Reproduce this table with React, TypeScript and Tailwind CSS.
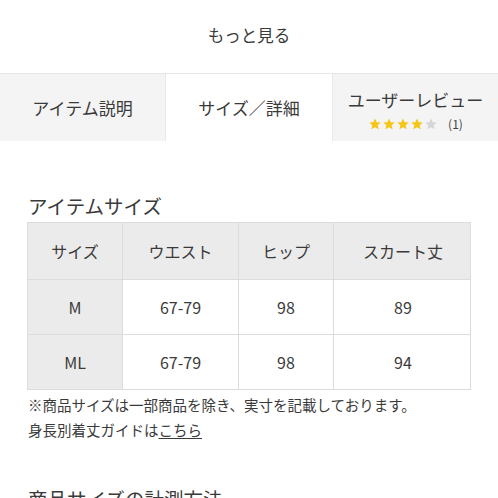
import React from "react";

const Star = ({ on }: { on: boolean }) => (
  <svg width="14" height="14" viewBox="0 0 24 24" className="shrink-0">
    <path
      d="M12 2.5l2.9 6.3 6.9.7-5.2 4.6 1.5 6.8L12 17.4l-6.1 3.5 1.5-6.8-5.2-4.6 6.9-.7z"
      fill={on ? "#f5c518" : "#d6d6d6"}
    />
  </svg>
);

export default function App() {
  const rows = [
    ["M", "67-79", "98", "89"],
    ["ML", "67-79", "98", "94"],
  ];
  return (
    <div
      className="w-[498px] h-[498px] overflow-hidden bg-white text-[#3a3a3a]"
      style={{ fontFamily: '"Noto Sans CJK JP", "Noto Sans", sans-serif' }}
    >
      <div className="h-[73px] flex items-center justify-center text-[16.5px] pb-[3px]">
        もっと見る
      </div>
      <div className="grid grid-cols-[166px_166px_166px] h-[68px] border-t border-[#e6e6e6]">
        <div className="bg-[#f4f4f4] border-r border-[#e8e8e8] flex items-center justify-center text-[17px]">
          アイテム説明
        </div>
        <div className="bg-white flex items-center justify-center text-[17px]">
          サイズ／詳細
        </div>
        <div className="bg-[#f4f4f4] border-l border-[#e8e8e8] flex flex-col items-center pt-[15px]">
          <div className="text-[17px] leading-[22px]">ユーザーレビュー</div>
          <div className="flex items-center mt-[4px]">
            <Star on />
            <Star on />
            <Star on />
            <Star on />
            <Star on={false} />
            <span className="text-[12px] ml-[10px] text-[#444]">(1)</span>
          </div>
        </div>
      </div>
      <div className="pt-[52px] px-[27px]">
        <div className="text-[19.5px] leading-[26px] ml-[1px]">アイテムサイズ</div>
        <div className="mt-[3px] w-[444px] border border-[#dcdcdc] text-[16px]">
          <div className="grid grid-cols-[95px_116px_95px_138px] h-[56px] bg-[#ebebeb]">
            <div className="flex items-center justify-center border-r border-[#dcdcdc]">サイズ</div>
            <div className="flex items-center justify-center border-r border-[#dcdcdc]">ウエスト</div>
            <div className="flex items-center justify-center border-r border-[#dcdcdc]">ヒップ</div>
            <div className="flex items-center justify-center">スカート丈</div>
          </div>
          {rows.map((r) => (
            <div
              key={r[0]}
              className="grid grid-cols-[95px_116px_95px_138px] h-[55px] border-t border-[#dcdcdc]"
            >
              <div className="flex items-center justify-center bg-[#ebebeb] border-r border-[#dcdcdc]">
                {r[0]}
              </div>
              <div className="flex items-center justify-center border-r border-[#dcdcdc]">{r[1]}</div>
              <div className="flex items-center justify-center border-r border-[#dcdcdc]">{r[2]}</div>
              <div className="flex items-center justify-center">{r[3]}</div>
            </div>
          ))}
        </div>
        <div className="text-[14.5px] leading-[25px] mt-[2px] ml-[1px]">
          <div>※商品サイズは一部商品を除き、実寸を記載しております。</div>
          <div>
            身長別着丈ガイドは<span className="underline underline-offset-2">こちら</span>
          </div>
        </div>
        <div className="text-[19.5px] leading-[26px] mt-[44px] ml-[1px]">商品サイズの計測方法</div>
      </div>
    </div>
  );
}
